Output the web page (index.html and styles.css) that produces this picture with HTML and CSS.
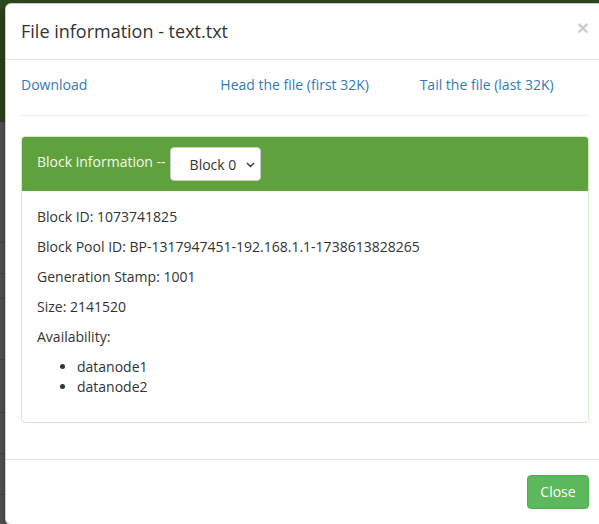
FILE: index.html
```html
<!DOCTYPE html>
<html>
<head>
<meta charset="utf-8">
<link rel="stylesheet" href="styles.css">
</head>
<body>
<div class="page">
  <div class="page-header"></div>
  <div class="page-content">
    <div class="bg-row r1"></div>
    <div class="bg-row r2"></div>
    <div class="bg-row r3"></div>
    <div class="bg-row r4"></div>
    <div class="bg-row r5"></div>
    <div class="bg-row r6"></div>
    <div class="bg-row r7"></div>
  </div>
</div>
<div class="modal">
  <div class="modal-header">
    <h4 class="modal-title">File information - text.txt</h4>
    <span class="close">×</span>
  </div>
  <div class="modal-body">
    <div class="links">
      <a href="#">Download</a>
      <a href="#">Head the file (first 32K)</a>
      <a href="#">Tail the file (last 32K)</a>
    </div>
    <hr>
    <div class="panel">
      <div class="panel-heading">
        <span class="heading-label">Block information --</span>
        <div class="select">
          <span>Block 0</span>
          <svg width="9" height="6" viewBox="0 0 9 6"><path d="M1 1 L4.5 4.5 L8 1" fill="none" stroke="#333" stroke-width="1.4"/></svg>
        </div>
      </div>
      <div class="panel-body">
        <p>Block ID: 1073741825</p>
        <p>Block Pool ID: BP-1317947451-192.168.1.1-1738613828265</p>
        <p>Generation Stamp: 1001</p>
        <p>Size: 2141520</p>
        <p>Availability:</p>
        <ul>
          <li>datanode1</li>
          <li>datanode2</li>
        </ul>
      </div>
    </div>
  </div>
  <div class="modal-footer">
    <button class="btn">Close</button>
  </div>
</div>
</body>
</html>
```
FILE: styles.css
```css
html, body {
  margin: 0;
  padding: 0;
  width: 599px;
  height: 524px;
  overflow: hidden;
}
body {
  font-family: "Open Sans", "Liberation Sans", sans-serif;
  font-size: 14px;
  line-height: 20px;
  color: #333;
  background: #5b5b5b;
  position: relative;
}
.page-header {
  height: 121px;
  background: #2f4a1e;
  border-bottom: 1px solid #3a3a3a;
}
.page-content {
  display: flex;
  flex-direction: column;
}
.bg-row {
  border-bottom: 1px solid #4c4c4c;
}
.r1 { height: 120px; }
.r2 { height: 30px; }
.r3 { height: 24px; }
.r4 { height: 60px; }
.r5 { height: 52px; }
.r6 { height: 40px; }
.r7 { height: 40px; }

.modal {
  position: absolute;
  left: 5px;
  top: 3px;
  width: 598px;
  background: #fff;
  border: 1px solid rgba(0,0,0,.2);
  border-radius: 6px;
  box-shadow: 0 5px 15px rgba(0,0,0,.5);
}
.modal-header {
  padding: 15px;
  border-bottom: 1px solid #e5e5e5;
  position: relative;
}
.modal-title {
  margin: 0;
  font-size: 18px;
  font-weight: 500;
  line-height: 25px;
  color: #333;
}
.close {
  position: absolute;
  right: 15px;
  top: 13px;
  font-size: 21px;
  font-weight: bold;
  line-height: 21px;
  color: #000;
  opacity: .2;
  font-family: "Liberation Sans", sans-serif;
}
.modal-body {
  padding: 15px 15px 16px;
}
.links {
  display: grid;
  grid-template-columns: 1fr 1fr 1fr;
  margin: 0 -15px;
}
.links a {
  padding: 0 15px;
  color: #337ab7;
  text-decoration: none;
}
hr {
  margin: 20px 0;
  border: 0;
  border-top: 1px solid #eee;
}
.panel {
  border: 1px solid #d6e9c6;
  border-radius: 4px;
  margin-bottom: 20px;
}
.panel-heading {
  background: #5fa23d;
  color: #f2f9ee;
  padding: 10px 15px;
  border-radius: 3px 3px 0 0;
  display: flex;
  align-items: center;
  gap: 3px;
}
.heading-label {
  padding-bottom: 5px;
}
.select {
  width: 91px;
  height: 34px;
  box-sizing: border-box;
  background: #fff;
  border: 1px solid #ccc;
  border-radius: 4px;
  display: flex;
  align-items: center;
  padding: 0 0 0 19px;
  color: #333;
  margin-left: 1px;
  gap: 10px;
}
.select span {
  padding-top: 1px;
}
.select svg {
  margin-top: 1px;
}
.panel-body {
  padding: 16px 15px 15px;
}
.panel-body p {
  margin: 0 0 10px;
}
.panel-body ul {
  margin: 0 0 10px;
  padding-left: 40px;
}
.modal-footer {
  border-top: 1px solid #e5e5e5;
  padding: 15px;
  display: flex;
  justify-content: flex-end;
}
.btn {
  font-family: "Open Sans", "Liberation Sans", sans-serif;
  font-size: 14px;
  line-height: 20px;
  padding: 6px 12px;
  height: 34px;
  width: 62px;
  color: #fff;
  background: #5cb85c;
  border: 1px solid #4cae4c;
  border-radius: 4px;
}
```
